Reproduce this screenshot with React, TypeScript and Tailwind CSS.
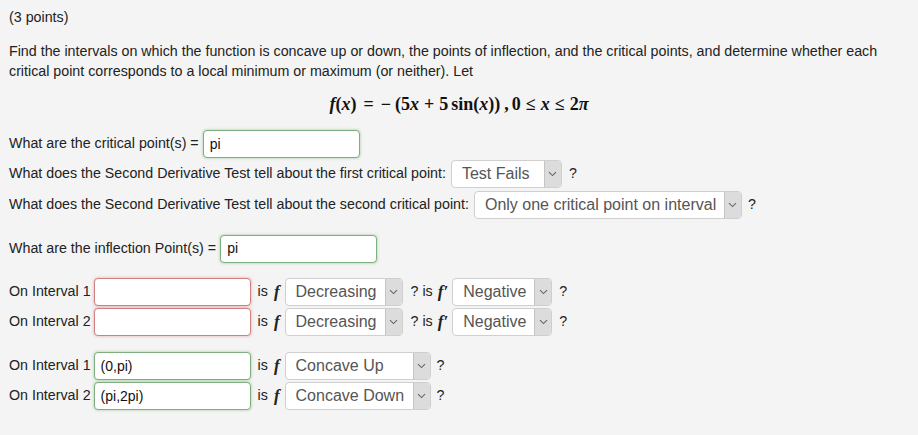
import React from "react";

const Chevron = () => (
  <svg width="9" height="6" viewBox="0 0 9 6" fill="none">
    <path d="M1 1.2 L4.5 4.6 L8 1.2" stroke="#666" strokeWidth="1.1" />
  </svg>
);

function Sel({ value, w }: { value: string; w: string }) {
  return (
    <div
      className={`${w} h-[28px] flex items-stretch bg-white border border-[#cfcfcf] rounded-[4px] overflow-hidden`}
    >
      <div className="flex-1 flex items-center pl-[10px] text-[16px] text-[#555] whitespace-nowrap">{value}</div>
      <div className="w-[17px] flex items-center justify-center bg-[#dcdcdc] border-l border-[#c4c4c4]">
        <Chevron />
      </div>
    </div>
  );
}

function Inp({ value, w, tone }: { value: string; w: string; tone: "green" | "red" }) {
  const cls =
    tone === "green"
      ? "border-[#7fae7f] shadow-[0_0_3px_rgba(90,160,90,0.55)]"
      : "border-[#d08080] shadow-[0_0_3px_rgba(200,90,90,0.5)]";
  return (
    <div
      className={`${w} h-[28px] flex items-center bg-white border ${cls} rounded-[4px] pl-[6px] text-[14px] text-[#111]`}
    >
      {value}
    </div>
  );
}

const F = () => (
  <span className="font-['Liberation_Serif',serif] italic font-bold text-[17px] ml-[6px] mr-[5px]">f</span>
);
const Fp = () => (
  <span className="font-['Liberation_Serif',serif] italic font-bold text-[17px] ml-[5px] mr-[4px]">
    f′
  </span>
);

export default function App() {
  return (
    <div className="w-[918px] h-[435px] bg-[#f4f4f4] text-[#222] font-['Liberation_Sans',Arial,sans-serif] text-[14.25px] pl-[9px] overflow-hidden">
      <div className="pt-[7px] leading-[20px]">(3 points)</div>
      <div className="mt-[14px] leading-[20px] w-[895px]">
        Find the intervals on which the function is concave up or down, the points of inflection, and the critical
        points, and determine whether each critical point corresponds to a local minimum or maximum (or neither). Let
      </div>
      <div className="mt-[10px] h-[26px] flex items-center justify-center pr-[9px] font-['Liberation_Serif',serif] text-[18px] font-bold text-[#111]">
        <span className="italic">f</span>
        <span>(</span>
        <span className="italic">x</span>
        <span>)</span>
        <span className="mx-[7px]">=</span>
        <span>−</span>
        <span className="ml-[4px]">(</span>
        <span>5</span>
        <span className="italic">x</span>
        <span className="mx-[5px]">+</span>
        <span>5</span>
        <span className="ml-[3px]">sin(</span>
        <span className="italic">x</span>
        <span>))</span>
        <span className="ml-[4px]">,</span>
        <span className="ml-[3px]">0</span>
        <span className="mx-[5px]">≤</span>
        <span className="italic">x</span>
        <span className="mx-[5px]">≤</span>
        <span>2</span>
        <span className="italic">π</span>
      </div>

      <div className="mt-[13px] h-[28px] flex items-center">
        <span className="mr-[4px]">What are the critical point(s) =</span>
        <Inp value="pi" w="w-[157px]" tone="green" />
      </div>
      <div className="mt-[2px] h-[28px] flex items-center">
        <span className="mr-[5px]">What does the Second Derivative Test tell about the first critical point:</span>
        <Sel value="Test Fails" w="w-[111px]" />
        <span className="ml-[7px]">?</span>
      </div>
      <div className="mt-[3px] h-[28px] flex items-center">
        <span className="mr-[5px]">What does the Second Derivative Test tell about the second critical point:</span>
        <Sel value="Only one critical point on interval" w="w-[268px]" />
        <span className="ml-[6px]">?</span>
      </div>

      <div className="mt-[15px] h-[29px] flex items-center">
        <span className="mr-[4px]">What are the inflection Point(s) =</span>
        <Inp value="pi" w="w-[157px]" tone="green" />
      </div>

      <div className="mt-[15px] h-[28px] flex items-center">
        <span className="mr-[3px]">On Interval 1</span>
        <Inp value="" w="w-[157px]" tone="red" />
        <span className="ml-[7px]">is</span>
        <F />
        <Sel value="Decreasing" w="w-[118px]" />
        <span className="ml-[8px]">? is</span>
        <Fp />
        <Sel value="Negative" w="w-[100px]" />
        <span className="ml-[7px]">?</span>
      </div>
      <div className="mt-[2px] h-[28px] flex items-center">
        <span className="mr-[3px]">On Interval 2</span>
        <Inp value="" w="w-[157px]" tone="red" />
        <span className="ml-[7px]">is</span>
        <F />
        <Sel value="Decreasing" w="w-[118px]" />
        <span className="ml-[8px]">? is</span>
        <Fp />
        <Sel value="Negative" w="w-[100px]" />
        <span className="ml-[7px]">?</span>
      </div>

      <div className="mt-[16px] h-[28px] flex items-center">
        <span className="mr-[3px]">On Interval 1</span>
        <Inp value="(0,pi)" w="w-[157px]" tone="green" />
        <span className="ml-[7px]">is</span>
        <F />
        <Sel value="Concave Up" w="w-[146px]" />
        <span className="ml-[6px]">?</span>
      </div>
      <div className="mt-[2px] h-[28px] flex items-center">
        <span className="mr-[3px]">On Interval 2</span>
        <Inp value="(pi,2pi)" w="w-[157px]" tone="green" />
        <span className="ml-[7px]">is</span>
        <F />
        <Sel value="Concave Down" w="w-[146px]" />
        <span className="ml-[6px]">?</span>
      </div>
    </div>
  );
}
